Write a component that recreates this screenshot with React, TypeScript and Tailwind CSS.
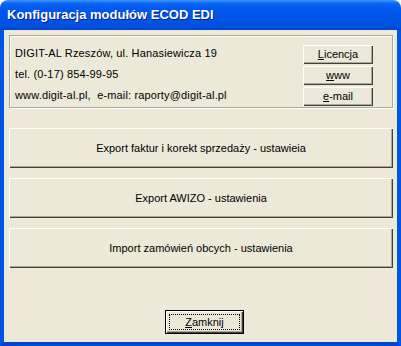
const bevel =
  'bg-[#ECE9D8] shadow-[inset_1px_1px_0_#ffffff,inset_-1px_-1px_0_#404040,inset_-2px_-2px_0_#aca899]';

// mała ikonka przycisku po prawej stronie ramki
function SmallButton({ hot, rest }: { hot: string; rest: string }) {
  return (
    <button
      className={`w-[70px] h-[19px] flex items-center justify-center text-[11px] text-black ${bevel}`}
    >
      <span>
        <span className="underline">{hot}</span>
        {rest}
      </span>
    </button>
  );
}

function BigButton({ label }: { label: string }) {
  return (
    <button className={`w-[384px] h-[40px] flex items-center justify-center text-[11px] text-black ${bevel}`}>
      {label}
    </button>
  );
}

export default function App() {
  return (
    <div
      className="w-[401px] h-[346px] flex flex-col overflow-hidden bg-white"
      style={{ fontFamily: '"Liberation Sans", Arial, sans-serif' }}
    >
      {/* pasek tytułu */}
      <div className="h-[30px] shrink-0 rounded-t-[8px] flex items-center pl-[7px] bg-[linear-gradient(to_bottom,#3d95ff_0%,#0a66f5_12%,#0058ee_30%,#0055e8_60%,#0050df_85%,#0044cf_100%)]">
        <span className="text-white font-bold text-[13px] [text-shadow:1px_1px_0_#0a1e8c]">
          Konfiguracja modułów ECOD EDI
        </span>
      </div>

      {/* obszar okna */}
      <div className="flex-1 flex flex-col border-x-4 border-b-4 border-x-[#0055e5] border-b-[#0046c8] bg-[#ECE9D8]">
        <div className="flex-1 flex flex-col items-start pl-[5px] pt-[5px]">
          <div className="w-[384px] h-[73px] border border-[#aca899] shadow-[inset_1px_1px_0_#ffffff,1px_1px_0_#ffffff] flex justify-between pl-[5px] pr-[19px] pt-[9px]">
            <div className="text-[11px] leading-[21px] text-black -mt-[2px] tracking-[0.15px]">
              <div>DIGIT-AL Rzeszów, ul. Hanasiewicza 19</div>
              <div>tel. (0-17) 854-99-95</div>
              <div>www.digit-al.pl,&nbsp; e-mail: raporty@digit-al.pl</div>
            </div>
            <div className="flex flex-col gap-[2px]">
              <SmallButton hot="L" rest="icencja" />
              <SmallButton hot="w" rest="ww" />
              <SmallButton hot="e" rest="-mail" />
            </div>
          </div>

          <div className="flex flex-col gap-[10px] mt-[20px]">
            <BigButton label="Export faktur i korekt sprzedaży - ustawieia" />
            <BigButton label="Export AWIZO - ustawienia" />
            <BigButton label="Import zamówień obcych - ustawienia" />
          </div>

          <div className="w-[384px] flex justify-center mt-[42px] pl-[7px]">
            <button className="w-[79px] h-[24px] border border-black bg-[#ECE9D8] shadow-[inset_1px_1px_0_#ffffff,inset_-1px_-1px_0_#404040,inset_-2px_-2px_0_#aca899] flex items-center justify-center p-[3px]">
              <span className="w-full h-full border border-dotted border-black flex items-center justify-center text-[11px] text-black">
                <span>
                  <span className="underline">Z</span>amknij
                </span>
              </span>
            </button>
          </div>
        </div>
      </div>
    </div>
  );
}
